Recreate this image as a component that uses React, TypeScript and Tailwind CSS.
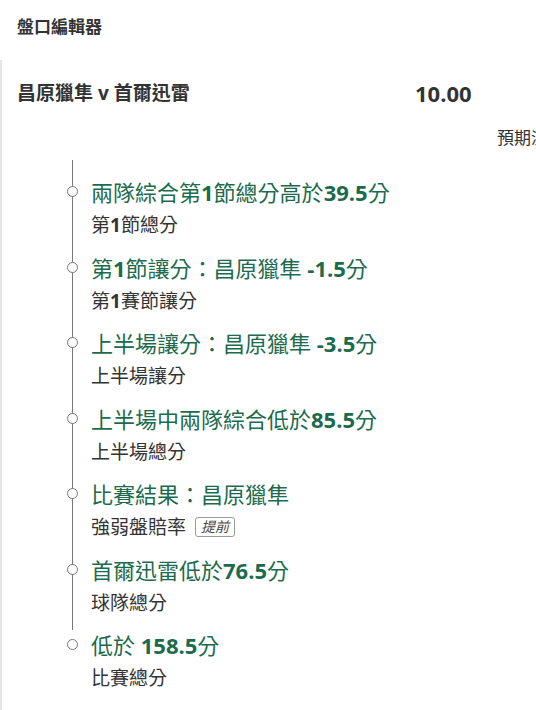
const items = [
  { title: [["兩隊綜合第", false], ["1", true], ["節總分高於", false], ["39.5", true], ["分", false]], sub: [["第", false], ["1", true], ["節總分", false]] },
  { title: [["第", false], ["1", true], ["節讓分：昌原獵隼 ", false], ["-1.5", true], ["分", false]], sub: [["第", false], ["1", true], ["賽節讓分", false]] },
  { title: [["上半場讓分：昌原獵隼 ", false], ["-3.5", true], ["分", false]], sub: [["上半場讓分", false]] },
  { title: [["上半場中兩隊綜合低於", false], ["85.5", true], ["分", false]], sub: [["上半場總分", false]] },
  { title: [["比賽結果：昌原獵隼", false]], sub: [["強弱盤賠率", false]], badge: "提前" },
  { title: [["首爾迅雷低於", false], ["76.5", true], ["分", false]], sub: [["球隊總分", false]] },
  { title: [["低於 ", false], ["158.5", true], ["分", false]], sub: [["比賽總分", false]] },
] as { title: [string, boolean][]; sub: [string, boolean][]; badge?: string }[];

function Parts({ parts }: { parts: [string, boolean][] }) {
  return (
    <>
      {parts.map(([t, b], i) => (
        <span key={i} className={b ? "font-bold" : ""}>
          {t}
        </span>
      ))}
    </>
  );
}

export default function App() {
  return (
    <div
      className="w-[536px] h-[710px] overflow-hidden bg-white text-[#333]"
      style={{ fontFamily: '"Open Sans", "Noto Sans CJK TC", sans-serif' }}
    >
      <div className="px-[17px] pt-[14px] h-[60px]">
        <h1 className="text-[17px] font-bold leading-[26px]">盤口編輯器</h1>
      </div>

      <div className="border-l-2 border-[#e6e6e6] min-h-[650px]">
        <div className="flex items-center pl-[15px] h-[66px]">
          <div className="w-[398px] text-[19px] font-bold leading-[28px]">
            昌原獵隼 v 首爾迅雷
          </div>
          <div className="text-[22px] font-bold leading-[28px]">10.00</div>
        </div>
        <div className="flex">
          <div className="ml-[495px] whitespace-nowrap text-[17px] leading-[24px] h-[34px]">
            預期派彩
          </div>
        </div>

        <div className="relative ml-[70px] pt-[16px]">
          <div className="absolute left-0 top-0 bottom-[60px] w-px bg-[#777]" />
          <div className="flex flex-col gap-[14.5px]">
            {items.map((it, i) => (
              <div key={i} className="relative pl-[19px]">
                <div className="absolute left-[-5px] top-[10px] w-[11px] h-[11px] rounded-full border border-[#777] bg-white" />
                <div className="text-[22px] leading-[32px] text-[#1b6b4c] whitespace-nowrap">
                  <Parts parts={it.title} />
                </div>
                <div className="mt-[5px] flex items-center text-[19px] leading-[24px] text-[#333]">
                  <span>
                    <Parts parts={it.sub} />
                  </span>
                  {it.badge && (
                    <span className="ml-[9px] px-[5px] text-[14px] leading-[18px] italic border border-[#999] rounded-[3px] text-[#444]">
                      {it.badge}
                    </span>
                  )}
                </div>
              </div>
            ))}
          </div>
        </div>
      </div>
    </div>
  );
}
